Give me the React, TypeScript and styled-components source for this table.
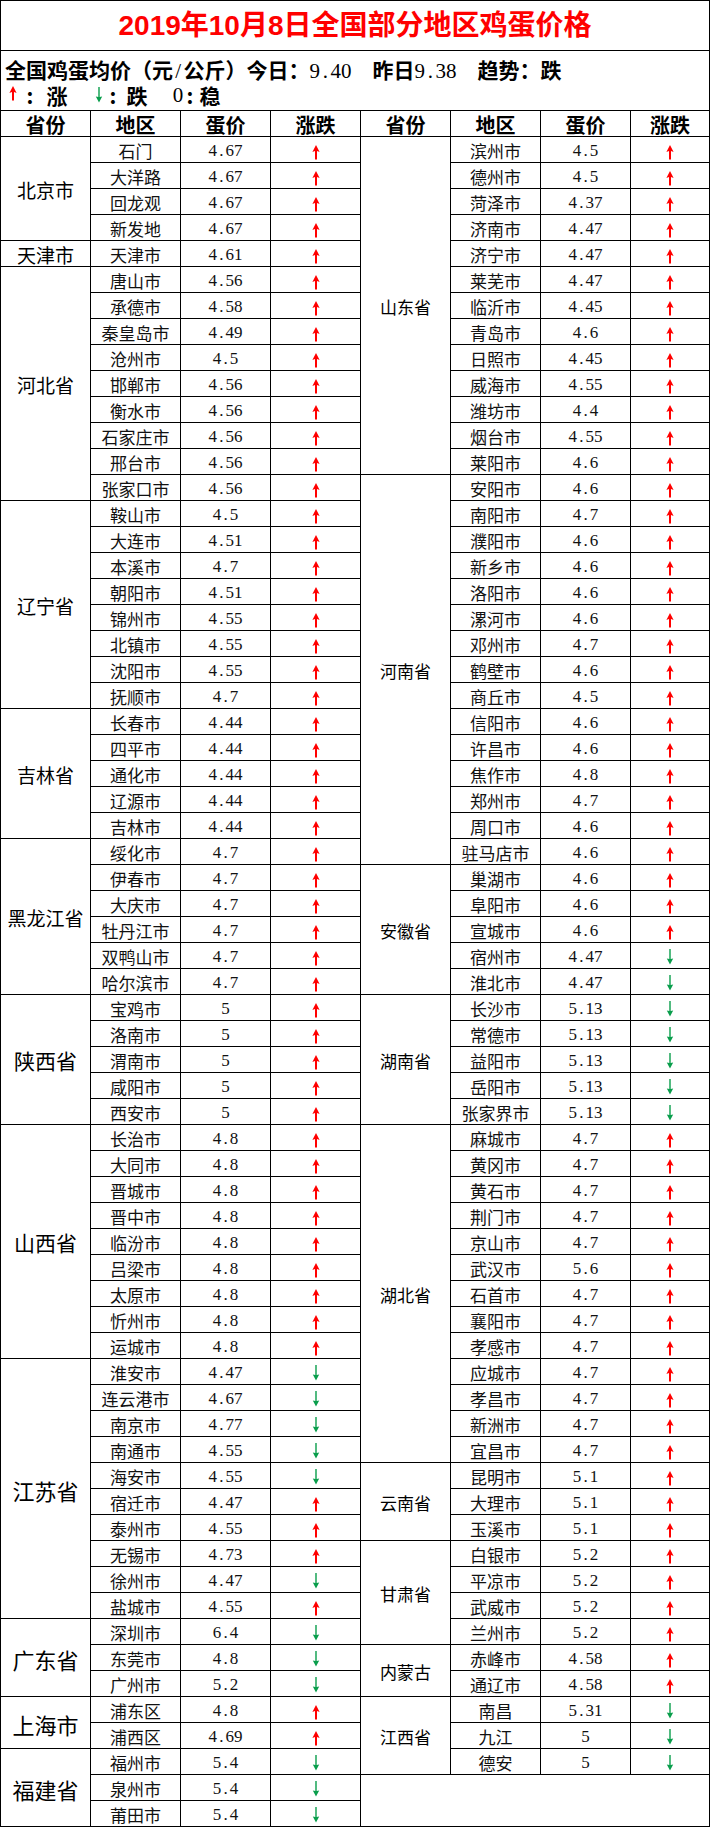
import React from "react";
import styled, { createGlobalStyle } from "styled-components";

type Trend = "up" | "down";

interface ICity {
  name: string;
  price: string;
  trend: Trend;
}

interface IProvince {
  name: string;
  size: number;
  cities: ICity[];
}

const RED = "#ff0000";
const GREEN = "#0a9e4c";
const LINE = "1px solid #000";

// 一行一个城市：名称、价格、涨跌
const c = (name: string, price: string, trend: Trend = "up"): ICity => ({ name, price, trend });

const leftData: IProvince[] = [
  { name: "北京市", size: 19, cities: [c("石门", "4.67"), c("大洋路", "4.67"), c("回龙观", "4.67"), c("新发地", "4.67")] },
  { name: "天津市", size: 19, cities: [c("天津市", "4.61")] },
  {
    name: "河北省",
    size: 19,
    cities: [
      c("唐山市", "4.56"), c("承德市", "4.58"), c("秦皇岛市", "4.49"), c("沧州市", "4.5"), c("邯郸市", "4.56"),
      c("衡水市", "4.56"), c("石家庄市", "4.56"), c("邢台市", "4.56"), c("张家口市", "4.56"),
    ],
  },
  {
    name: "辽宁省",
    size: 19,
    cities: [
      c("鞍山市", "4.5"), c("大连市", "4.51"), c("本溪市", "4.7"), c("朝阳市", "4.51"),
      c("锦州市", "4.55"), c("北镇市", "4.55"), c("沈阳市", "4.55"), c("抚顺市", "4.7"),
    ],
  },
  {
    name: "吉林省",
    size: 19,
    cities: [c("长春市", "4.44"), c("四平市", "4.44"), c("通化市", "4.44"), c("辽源市", "4.44"), c("吉林市", "4.44")],
  },
  {
    name: "黑龙江省",
    size: 19,
    cities: [
      c("绥化市", "4.7"), c("伊春市", "4.7"), c("大庆市", "4.7"),
      c("牡丹江市", "4.7"), c("双鸭山市", "4.7"), c("哈尔滨市", "4.7"),
    ],
  },
  {
    name: "陕西省",
    size: 21,
    cities: [c("宝鸡市", "5"), c("洛南市", "5"), c("渭南市", "5"), c("咸阳市", "5"), c("西安市", "5")],
  },
  {
    name: "山西省",
    size: 21,
    cities: [
      c("长治市", "4.8"), c("大同市", "4.8"), c("晋城市", "4.8"), c("晋中市", "4.8"), c("临汾市", "4.8"),
      c("吕梁市", "4.8"), c("太原市", "4.8"), c("忻州市", "4.8"), c("运城市", "4.8"),
    ],
  },
  {
    name: "江苏省",
    size: 22,
    cities: [
      c("淮安市", "4.47", "down"), c("连云港市", "4.67", "down"), c("南京市", "4.77", "down"),
      c("南通市", "4.55", "down"), c("海安市", "4.55", "down"), c("宿迁市", "4.47"), c("泰州市", "4.55"),
      c("无锡市", "4.73"), c("徐州市", "4.47", "down"), c("盐城市", "4.55"),
    ],
  },
  {
    name: "广东省",
    size: 22,
    cities: [c("深圳市", "6.4", "down"), c("东莞市", "4.8", "down"), c("广州市", "5.2", "down")],
  },
  { name: "上海市", size: 22, cities: [c("浦东区", "4.8"), c("浦西区", "4.69")] },
  {
    name: "福建省",
    size: 22,
    cities: [c("福州市", "5.4", "down"), c("泉州市", "5.4", "down"), c("莆田市", "5.4", "down")],
  },
];

const rightData: IProvince[] = [
  {
    name: "山东省",
    size: 17,
    cities: [
      c("滨州市", "4.5"), c("德州市", "4.5"), c("菏泽市", "4.37"), c("济南市", "4.47"), c("济宁市", "4.47"),
      c("莱芜市", "4.47"), c("临沂市", "4.45"), c("青岛市", "4.6"), c("日照市", "4.45"), c("威海市", "4.55"),
      c("潍坊市", "4.4"), c("烟台市", "4.55"), c("莱阳市", "4.6"),
    ],
  },
  {
    name: "河南省",
    size: 17,
    cities: [
      c("安阳市", "4.6"), c("南阳市", "4.7"), c("濮阳市", "4.6"), c("新乡市", "4.6"), c("洛阳市", "4.6"),
      c("漯河市", "4.6"), c("邓州市", "4.7"), c("鹤壁市", "4.6"), c("商丘市", "4.5"), c("信阳市", "4.6"),
      c("许昌市", "4.6"), c("焦作市", "4.8"), c("郑州市", "4.7"), c("周口市", "4.6"), c("驻马店市", "4.6"),
    ],
  },
  {
    name: "安徽省",
    size: 17,
    cities: [
      c("巢湖市", "4.6"), c("阜阳市", "4.6"), c("宣城市", "4.6"),
      c("宿州市", "4.47", "down"), c("淮北市", "4.47", "down"),
    ],
  },
  {
    name: "湖南省",
    size: 17,
    cities: [
      c("长沙市", "5.13", "down"), c("常德市", "5.13", "down"), c("益阳市", "5.13", "down"),
      c("岳阳市", "5.13", "down"), c("张家界市", "5.13", "down"),
    ],
  },
  {
    name: "湖北省",
    size: 17,
    cities: [
      c("麻城市", "4.7"), c("黄冈市", "4.7"), c("黄石市", "4.7"), c("荆门市", "4.7"), c("京山市", "4.7"),
      c("武汉市", "5.6"), c("石首市", "4.7"), c("襄阳市", "4.7"), c("孝感市", "4.7"), c("应城市", "4.7"),
      c("孝昌市", "4.7"), c("新洲市", "4.7"), c("宜昌市", "4.7"),
    ],
  },
  { name: "云南省", size: 17, cities: [c("昆明市", "5.1"), c("大理市", "5.1"), c("玉溪市", "5.1")] },
  {
    name: "甘肃省",
    size: 17,
    cities: [c("白银市", "5.2"), c("平凉市", "5.2"), c("武威市", "5.2"), c("兰州市", "5.2")],
  },
  { name: "内蒙古", size: 17, cities: [c("赤峰市", "4.58"), c("通辽市", "4.58")] },
  {
    name: "江西省",
    size: 17,
    cities: [c("南昌", "5.31", "down"), c("九江", "5", "down"), c("德安", "5", "down")],
  },
];

const headers = ["省份", "地区", "蛋价", "涨跌", "省份", "地区", "蛋价", "涨跌"];

const GlobalStyle = createGlobalStyle`
  html, body {
    margin: 0;
    padding: 0;
    background: #fff;
  }
  body {
    font-family: "Noto Sans CJK SC", "Liberation Sans", sans-serif;
    color: #000;
  }
  *, *::before, *::after {
    box-sizing: border-box;
  }
`;

const Sheet = styled.div`
  width: 710px;
  border-top: ${LINE};
  border-left: ${LINE};
  background: #fff;
`;

const TitleRow = styled.div`
  height: 50px;
  border-right: ${LINE};
  border-bottom: ${LINE};
  display: flex;
  align-items: center;
  justify-content: center;
  color: ${RED};
  font-family: "Liberation Sans", "Noto Sans CJK SC", sans-serif;
  font-size: 28px;
  font-weight: bold;
  line-height: 1;
  padding-top: 1px;
`;

const InfoRow = styled.div`
  height: 60px;
  border-right: ${LINE};
  border-bottom: ${LINE};
  padding: 5px 0 0 4px;
  font-size: 21px;
  font-weight: bold;
`;

const InfoLine = styled.div`
  height: 26px;
  line-height: 26px;
  white-space: pre;
`;

const LegendLine = styled.div`
  height: 26px;
  display: flex;
  align-items: center;
  line-height: 1;
`;

// 宋体式的半角数字：每个字符占半个字宽
const HalfChar = styled.span`
  display: inline-block;
  width: 0.5em;
  text-align: center;
  font-family: "Liberation Serif", serif;
  font-weight: normal;
  white-space: pre;
`;

const Mono = ({ text }: { text: string }) => (
  <>
    {text.split("").map((ch, i) => (
      <HalfChar key={i}>{ch}</HalfChar>
    ))}
  </>
);

const LegendBox = styled.span<{ $w: number }>`
  width: ${p => p.$w}px;
  display: inline-flex;
  justify-content: center;
  align-items: center;
  flex: none;
`;

const HeaderRow = styled.div`
  display: grid;
  grid-template-columns: repeat(7, 90px) 79px;
  height: 26px;
`;

const HeaderCell = styled.div`
  border-right: ${LINE};
  border-bottom: ${LINE};
  display: flex;
  align-items: center;
  justify-content: center;
  font-size: 20px;
  font-weight: bold;
  line-height: 1;
  padding-top: 2px;
`;

const Body = styled.div`
  display: flex;
  align-items: flex-start;
`;

const Half = styled.div<{ $w: number }>`
  width: ${p => p.$w}px;
  display: flex;
  flex-direction: column;
`;

const Group = styled.div`
  display: flex;
`;

const ProvinceCell = styled.div<{ $size: number }>`
  width: 90px;
  flex: none;
  border-right: ${LINE};
  border-bottom: ${LINE};
  display: flex;
  align-items: center;
  justify-content: center;
  font-size: ${p => p.$size}px;
  line-height: 1;
  padding-top: 2px;
  white-space: nowrap;
`;

const CityList = styled.div`
  flex: 1;
  display: flex;
  flex-direction: column;
`;

const CityRow = styled.div<{ $last: number }>`
  display: grid;
  grid-template-columns: 90px 90px ${p => p.$last}px;
  grid-template-rows: 26px;
  height: 26px;
`;

const Cell = styled.div`
  border-right: ${LINE};
  border-bottom: ${LINE};
  display: flex;
  align-items: center;
  justify-content: center;
  line-height: 1;
  padding-top: 2px;
  white-space: nowrap;
  overflow: hidden;
`;

const NameCell = styled(Cell)`
  font-size: 17px;
  color: #111;
`;

const PriceCell = styled(Cell)`
  font-size: 17px;
  color: #111;
`;

const TrendCell = styled(Cell)`
  padding-top: 0;
`;

const Filler = styled.div<{ $rows: number }>`
  height: ${p => p.$rows * 26}px;
  border-right: ${LINE};
  border-bottom: ${LINE};
`;

const UpArrow = ({ y = 8 }: { y?: number }) => (
  <svg width="10" height="25" viewBox="0 0 10 25">
    <path d={`M5 ${y} L8.6 ${y + 7} L6 ${y + 6} L6 ${y + 14.5} L4 ${y + 14.5} L4 ${y + 6} L1.4 ${y + 7} Z`} fill={RED} />
  </svg>
);

const DownArrow = ({ y = 6 }: { y?: number }) => (
  <svg width="10" height="25" viewBox="0 0 10 25">
    <path d={`M4.3 ${y} L5.7 ${y} L5.7 ${y + 10} L8.2 ${y + 9.5} L5 ${y + 15.5} L1.8 ${y + 9.5} L4.3 ${y + 10} Z`} fill={GREEN} />
  </svg>
);

const ProvinceBlock = ({ data, last }: { data: IProvince; last: number }) => (
  <Group>
    <ProvinceCell $size={data.size}>{data.name}</ProvinceCell>
    <CityList>
      {data.cities.map(city => (
        <CityRow $last={last} key={city.name}>
          <NameCell>{city.name}</NameCell>
          <PriceCell>
            <Mono text={city.price} />
          </PriceCell>
          <TrendCell>{city.trend === "up" ? <UpArrow /> : <DownArrow />}</TrendCell>
        </CityRow>
      ))}
    </CityList>
  </Group>
);

const App = () => {
  const leftRows = leftData.reduce((sum, p) => sum + p.cities.length, 0);
  const rightRows = rightData.reduce((sum, p) => sum + p.cities.length, 0);

  return (
    <>
      <GlobalStyle />
      <Sheet>
        <TitleRow>2019年10月8日全国部分地区鸡蛋价格</TitleRow>
        <InfoRow>
          <InfoLine>
            全国鸡蛋均价（元<Mono text="/" />公斤）今日：<Mono text="9.40  " />昨日<Mono text="9.38  " />趋势：跌
          </InfoLine>
          <LegendLine>
            <LegendBox $w={16}><UpArrow y={3} /></LegendBox>
            <LegendBox $w={18}>:</LegendBox>
            <LegendBox $w={36}>涨</LegendBox>
            <LegendBox $w={16} />
            <LegendBox $w={16}><DownArrow y={4} /></LegendBox>
            <LegendBox $w={12}>:</LegendBox>
            <LegendBox $w={36}>跌</LegendBox>
            <LegendBox $w={15} />
            <LegendBox $w={16}><Mono text="0" /></LegendBox>
            <LegendBox $w={8}>:</LegendBox>
            <LegendBox $w={32}>稳</LegendBox>
          </LegendLine>
        </InfoRow>
        <HeaderRow>
          {headers.map((h, i) => (
            <HeaderCell key={i}>{h}</HeaderCell>
          ))}
        </HeaderRow>
        <Body>
          <Half $w={360}>
            {leftData.map(p => (
              <ProvinceBlock data={p} last={90} key={p.name} />
            ))}
            {rightRows > leftRows && <Filler $rows={rightRows - leftRows} />}
          </Half>
          <Half $w={349}>
            {rightData.map(p => (
              <ProvinceBlock data={p} last={79} key={p.name} />
            ))}
            {leftRows > rightRows && <Filler $rows={leftRows - rightRows} />}
          </Half>
        </Body>
      </Sheet>
    </>
  );
};

export default App;
